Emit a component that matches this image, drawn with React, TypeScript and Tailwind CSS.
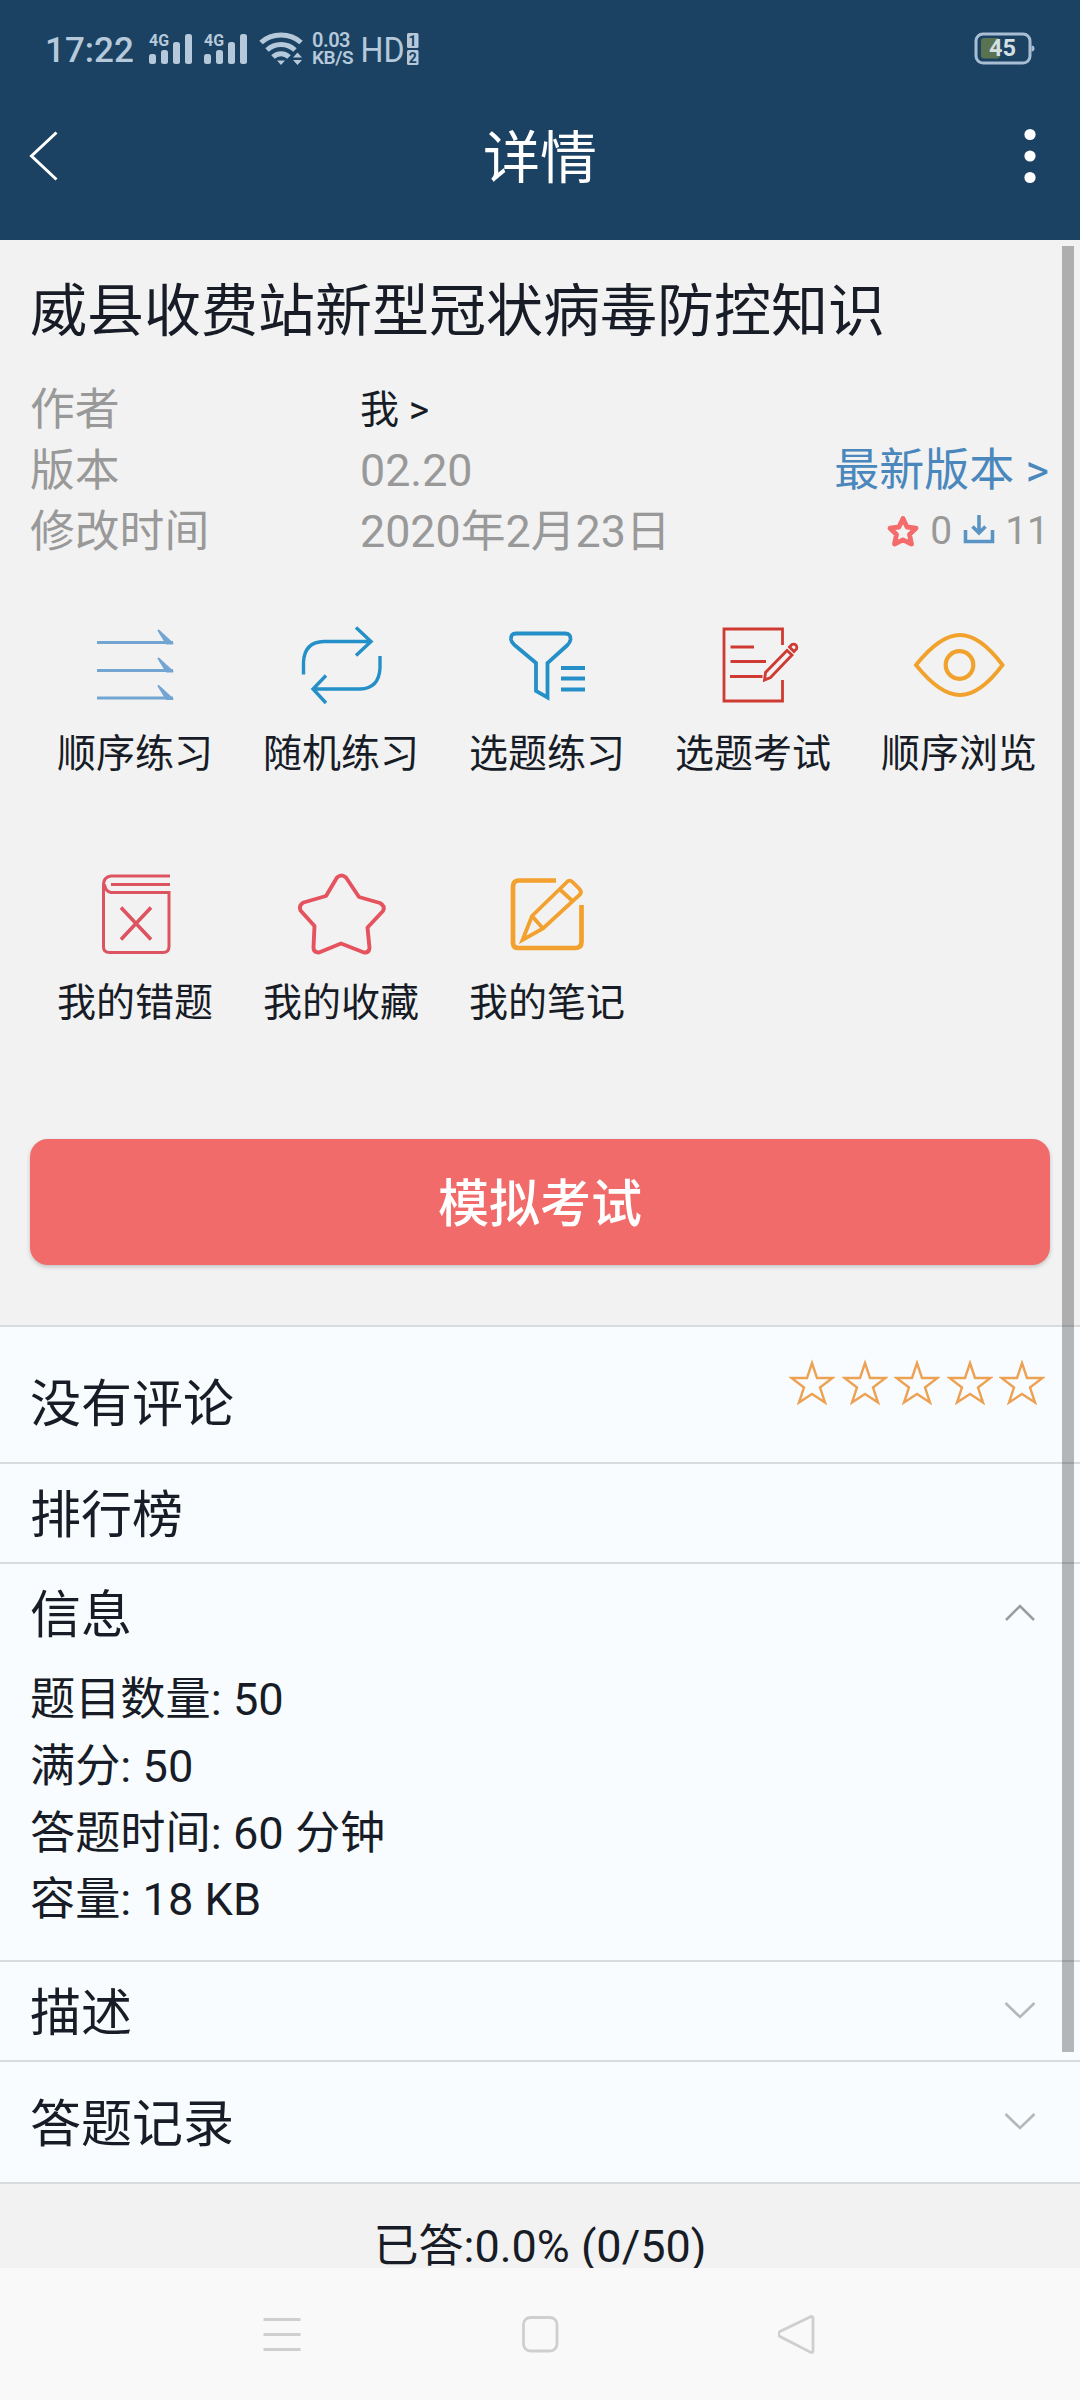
import type { ReactNode } from "react";

const META = [
  { label: "作者", value: "我 >" },
  { label: "版本", value: "02.20" },
  { label: "修改时间", value: "2020年2月23日" },
];

const INFO = ["题目数量: 50", "满分: 50", "答题时间: 60 分钟", "容量: 18 KB"];

const SignalIcon = () => (
  <svg width="44" height="32" viewBox="0 0 44 32" fill="#b5c9da" className="overflow-visible">
    <text x="0" y="13" fontSize="17" fontWeight="700" textLength="20" lengthAdjust="spacingAndGlyphs">
      4G
    </text>
    <rect x="0" y="21" width="7" height="10" rx="2.5" />
    <rect x="12" y="17" width="7" height="14" rx="2.5" />
    <rect x="24" y="9" width="7" height="22" rx="2.5" />
    <rect x="36" y="1" width="7" height="30" rx="2.5" />
  </svg>
);

const WifiIcon = () => (
  <svg width="44" height="34" viewBox="0 0 44 34" fill="none" stroke="#b5c9da" strokeWidth="5">
    <path d="M2 10.5C13 .5 31 .5 42 10.5" />
    <path d="M8 18C16 10.5 28 10.5 36 18" />
    <path d="M14 25C18.5 20.5 25.5 20.5 30 25" />
    <path d="M18 28.5h8l-4 4.5z M34 25.5l4.500-5 4.500 5z M34 28l4.500 5 4.500-5z" fill="#b5c9da" stroke="none" />
  </svg>
);

const StatusBar = () => (
  <div className="flex h-24 items-center pt-px pl-[45px] pr-[44px] text-[#b5c9da]">
    <span className="w-[104px] pt-1 text-[35px] font-medium leading-none">17:22</span>
    <SignalIcon />
    <span className="w-[11px]" />
    <SignalIcon />
    <span className="w-[11px]" />
    <WifiIcon />
    <div className="ml-[9px] flex w-[41px] flex-col text-[19px] font-semibold leading-[18px] tracking-tight">
      <span className="text-[20px]">0.03</span>
      <span>KB/S</span>
    </div>
    <svg width="60" height="36" viewBox="47 0 60 36" className="ml-[7px] overflow-visible" fill="#b5c9da">
      <text x="47.5" y="30.5" fontSize="35.5" textLength="44" lengthAdjust="spacingAndGlyphs">
        HD
      </text>
      <rect x="94" y="2" width="11.5" height="15" rx="1.5" />
      <rect x="94" y="19" width="11.5" height="15" rx="1.5" />
      <g fill="#1b4263" fontSize="14" fontWeight="700" textAnchor="middle">
        <text x="99.5" y="14.5">1</text>
        <text x="99.8" y="31.5">2</text>
      </g>
    </svg>
    <svg width="62" height="34" viewBox="0 0 62 34" className="ml-auto">
      <rect x="7" y="6" width="19" height="20.5" rx="3" fill="#59724f" />
      <rect x="2" y="2" width="54" height="29" rx="7" fill="none" stroke="#a9bdd3" strokeWidth="3" />
      <path d="M57.5 13.5q3 0 3 3t-3 3z" fill="#a9bdd3" />
      <text x="15" y="24" fontSize="23.5" fontWeight="700" fill="#d3dfe0">
        45
      </text>
    </svg>
  </div>
);

const Header = () => (
  <header className="h-60 bg-[#1b4263]">
    <StatusBar />
    <div className="flex h-[120px] items-center justify-between pl-7 pr-11">
      <svg width="32" height="52" viewBox="0 0 32 52" fill="none" stroke="#fff" strokeWidth="3">
        <path d="M28.5 2.5L3.5 26l25 23.5" />
      </svg>
      <h1 className="-ml-1 pt-[5px] text-[57px] leading-none text-white">详情</h1>
      <svg width="12" height="56" viewBox="0 0 12 56" fill="#fff">
        <circle cx="6" cy="6.5" r="5.6" />
        <circle cx="6" cy="28" r="5.6" />
        <circle cx="6" cy="49.5" r="5.6" />
      </svg>
    </div>
  </header>
);

const Icon = ({ color, width = 3, children }: { color: string; width?: number; children: ReactNode }) => (
  <svg width="96" height="96" viewBox="0 0 96 96" fill="none" stroke={color} strokeWidth={width}>
    {children}
  </svg>
);

const ACTIONS = [
  {
    label: "顺序练习",
    icon: (
      <Icon color="#73a5d3" width={3}>
        <path d="M10 25.500h76M10 53.500h76M10 81h76" />
        <path
          d="M71.500 13.500l14 13h-6zM71.500 41.500l14 13h-6zM71.500 69l14 13h-6z"
          fill="#73a5d3"
          strokeWidth="2"
          strokeLinejoin="round"
        />
      </Icon>
    ),
  },
  {
    label: "随机练习",
    icon: (
      <Icon color="#2590c8" width={3.4}>
        <path d="M10.500 57.500V45Q11.500 25 31 24.500H78M63 10.500L78 24.500 63 38.500" />
        <path d="M87 39v12Q86 71.500 67 72H20M33 58.500L20 72l13 14" />
      </Icon>
    ),
  },
  {
    label: "选题练习",
    icon: (
      <Icon color="#2590c8" width={3.8}>
        <path d="M17 16.500h49q6 0 5.500 6-.5 3-3 5.500L48.500 46v34.500L37 74V46L15.500 28q-3-2.500-3.500-5.500-.5-6 5-6z" />
        <path d="M62 51h24M62 61.500h24M62 72.500h24" />
      </Icon>
    ),
  },
  {
    label: "选题考试",
    icon: (
      <Icon color="#cf3a32" width={2.8}>
        <path d="M77.500 28V12H19v72h58.500V63" />
        <path d="M25.500 30H49M25.500 44.500H61M25 59.500h32.500" />
        <path d="M59.500 63l1-7.500L82 33.500l5 4.500-21.500 22.500zM84.500 30l2.500-2.500q2-1 4 .5 1.500 2 .5 4L89 34.500z" />
      </Icon>
    ),
  },
  {
    label: "顺序浏览",
    icon: (
      <Icon color="#f0a22d" width={3.8}>
        <path d="M5 48Q29 18 49 18T91.500 48Q69 78 49 78T5 48z" />
        <circle cx="48.500" cy="48" r="13.8" strokeWidth="4.2" />
      </Icon>
    ),
  },
  {
    label: "我的错题",
    icon: (
      <Icon color="#de5360" width={3}>
        <path d="M83 10H24q-7.500 1-7.500 9v62q0 5.500 6 5.500h53.500q6 0 6-6V26.500H24q-5.500-1-6.500-8" />
        <path d="M24 18.500h59" />
        <path d="M34 41.500l30 32M64 41.500l-30 32" strokeWidth="3.6" />
      </Icon>
    ),
  },
  {
    label: "我的收藏",
    icon: (
      <Icon color="#e5535f" width={3.9}>
        <path
          d="M44 11.500q4.500-4 9 0L66 31l21 6q5.500 3 3 8L74.500 61.500l2 20.500q-.5 5-5.500 4.500L48 77.500 26 86.500q-5.500 0-5.500-5L21.500 60 7.500 44.500q-2-5.500 3-8L33 30z"
          strokeLinejoin="round"
        />
      </Icon>
    ),
  },
  {
    label: "我的笔记",
    icon: (
      <Icon color="#f3a12e" width={4.7}>
        <path d="M57 14.500H20q-6 0-6 6.500v56q0 5 6 5h56q6.500 0 6.500-6V39" />
        <path
          d="M23.500 74l9.500-24 36-35q2.500-1 4.500 1l7 7q2.500 3 .5 5.500L44 62.500zM61 23.500l13 12M33 50l11 12.500"
          strokeWidth="3.8"
        />
      </Icon>
    ),
  },
];

const StarRow = () => (
  <div className="flex gap-[6.5px]">
    {[1, 2, 3, 4, 5].map((n) => (
      <svg key={n} width="46" height="46" viewBox="0 0 46 46" fill="none" stroke="#eda152" strokeWidth="2.4">
        <path d="M23 4l5 15h15.500L31 28.500 36 43.500 23 35 10 43.500l5-15L2.500 19H18z" />
      </svg>
    ))}
  </div>
);

const Chevron = ({ up = false }: { up?: boolean }) => (
  <svg width="34" height="20" viewBox="0 0 34 20" fill="none" stroke={up ? "#9a9da0" : "#b4b8bb"} strokeWidth="2.6">
    <path d={up ? "M3 17L17 3l14 14" : "M2.5 3L17 17 31.5 3"} />
  </svg>
);

const Row = ({ title, className, children }: { title: string; className: string; children?: ReactNode }) => (
  <div className={`flex justify-between border-b-2 border-[#d9dcdf] pl-[30px] ${className}`}>
    <h3 className="text-[51px] leading-[60px]">{title}</h3>
    {children}
  </div>
);

const NavBar = () => (
  <nav className="flex h-[132px] justify-between bg-[#f9f9f9] px-[262px] pt-[46px]">
    <svg width="40" height="42" viewBox="0 0 40 42" fill="none" stroke="#cfcfcf" strokeWidth="2.8">
      <path d="M1.5 5.5h37M1.5 20.5h37M1.5 35.5h37" />
    </svg>
    <svg width="40" height="42" viewBox="0 0 40 42" fill="none" stroke="#cfcfcf" strokeWidth="2.8">
      <rect x="3.5" y="3.5" width="33.5" height="33.5" rx="7" />
    </svg>
    <svg width="40" height="42" viewBox="1 0 40 42" fill="none" stroke="#cfcfcf" strokeWidth="2.8">
      <path d="M34 2.500L3 17.500q-3 2.500 0 5L34 38.500q2 .5 2-2V4.500q0-2-2-2z" />
    </svg>
  </nav>
);

export default function App() {
  return (
    <div className="relative flex h-[2400px] w-[1080px] flex-col overflow-hidden bg-[#f2f2f2] font-[Roboto,'Noto_Sans_CJK_SC',sans-serif] text-[#171c26]">
      <Header />

      {/* Title and meta */}
      <section className="h-[326px] pl-[30px] pr-[31px] pt-[40px]">
        <h2 className="text-[57px] leading-[64px]">威县收费站新型冠状病毒防控知识</h2>
        <div className="mt-[35px]">
          {META.map((m, i) => (
            <div key={m.label} className="flex h-[61px] items-center text-[44.8px] leading-[61px] text-[#999]">
              <span className="w-[330px]">{m.label}</span>
              {i === 0 ? <span className="pt-px text-[39px] text-[#171c26]">{m.value}</span> : <span>{m.value}</span>}
              {i === 1 && <span className="ml-auto text-[45px] text-[#4a87bd]">最新版本 &gt;</span>}
              {i === 2 && (
                <span className="ml-auto flex items-center text-[39px]">
                  <svg width="34" height="34" viewBox="0 1 34 34" fill="none" stroke="#f46b6b" strokeWidth="4.8">
                    <path d="M17 4.500l4 8.500 9 1.200-6.500 6.300 2 9.500L17 25.800 8.500 30l2-9.500L4 14.200 13 13z" strokeLinejoin="round" />
                  </svg>
                  <span className="ml-2.5">0</span>
                  <svg width="34" height="34" viewBox="0 3 34 34" className="ml-2.5" fill="none" stroke="#5a94c4" strokeWidth="3.6">
                    <path d="M3.500 18v11.500h27V18M17 2.500v18M10.500 14.500L17 21l6.500-6.500" />
                  </svg>
                  <span className="ml-[9px]">11</span>
                </span>
              )}
            </div>
          ))}
        </div>
      </section>

      {/* Practice shortcuts */}
      <section className="grid h-[573px] w-[1030px] grid-cols-5 content-start ml-[32px] pt-[51px]">
        {ACTIONS.map((a) => (
          <div key={a.label} className="flex h-[249px] flex-col items-center">
            {a.icon}
            <span className="mt-[11px] text-[39px] leading-[60px]">{a.label}</span>
          </div>
        ))}
      </section>

      <button className="mx-[30px] h-[126px] rounded-[18px] bg-[#f16b6b] pt-[5px] text-[51px] font-medium leading-none text-white shadow-[0_2px_4px_rgba(0,0,0,0.2)]">
        模拟考试
      </button>

      {/* Detail panels */}
      <section className="mt-[60px] border-t-2 border-[#d9dcdf] bg-[#f9fcff]">
        <Row title="没有评论" className="h-[137px] pt-[48px] pr-[35px]">
          <div className="-mt-[16px]">
            <StarRow />
          </div>
        </Row>
        <Row title="排行榜" className="h-[100px] pt-[22px] pr-[43px]" />
        <div className="h-[398px] border-b-2 border-[#d9dcdf] pl-[30px] pr-[43px] pt-[22px]">
          <div className="flex justify-between">
            <h3 className="text-[51px] leading-[60px]">信息</h3>
            <div className="pt-[17px]">
              <Chevron up />
            </div>
          </div>
          <div className="mt-[21px]">
            {INFO.map((line) => (
              <p key={line} className="text-[45.2px] leading-[66.8px]">
                {line}
              </p>
            ))}
          </div>
        </div>
        <Row title="描述" className="h-[100px] pt-[22px] pr-[43px]">
          <div className="pt-4">
            <Chevron />
          </div>
        </Row>
        <Row title="答题记录" className="h-[122px] pt-[33px] pr-[43px]">
          <div className="pt-4">
            <Chevron />
          </div>
        </Row>
      </section>

      <footer className="h-[84px] pt-[33px] text-center text-[45px] leading-[51px]">
        <p className="pt-1">已答:0.0% (0/50)</p>
      </footer>

      <NavBar />

      {/* Scroll indicator */}
      <div className="absolute left-[1062px] top-[246px] h-[1806px] w-3 bg-black/28" />
    </div>
  );
}
